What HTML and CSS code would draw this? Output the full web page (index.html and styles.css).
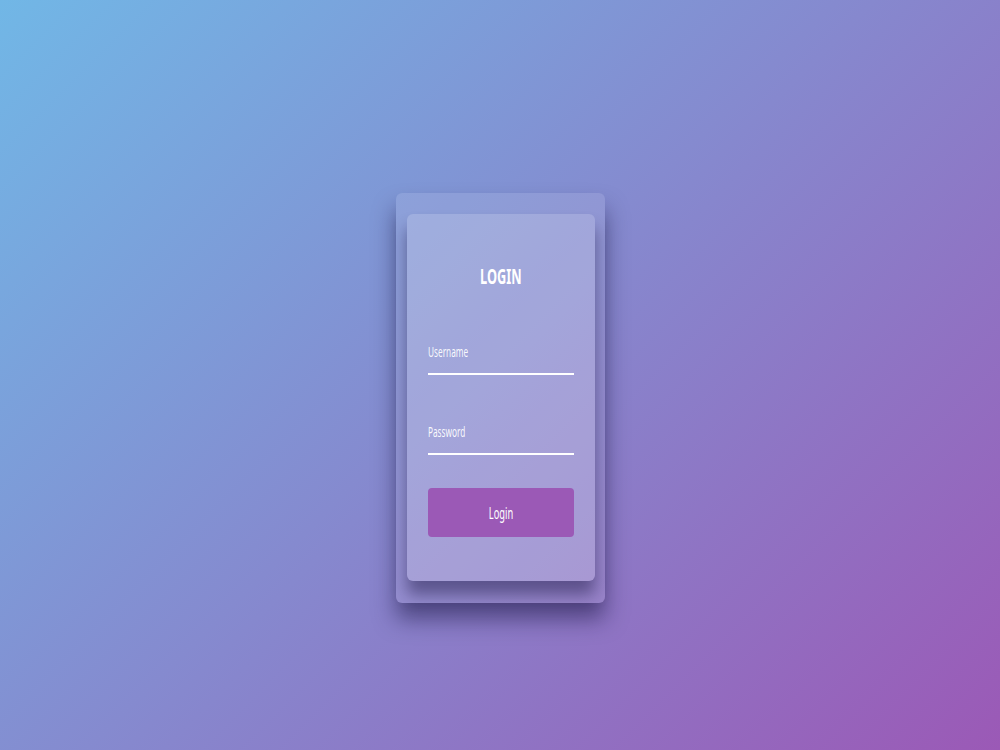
FILE: index.html
```html
<!DOCTYPE html>
<html lang="en">
<head>
<meta charset="utf-8">
<title>Login</title>
<link rel="stylesheet" href="styles.css">
</head>
<body>
<div class="stage">
  <div class="outer">
    <form class="card">
      <h1 class="title"><span class="squeeze">LOGIN</span></h1>
      <label class="field"><span class="label squeeze">Username</span></label>
      <label class="field field-gap"><span class="label squeeze">Password</span></label>
      <button type="button" class="btn"><span class="squeeze">Login</span></button>
    </form>
  </div>
</div>
</body>
</html>
```
FILE: styles.css
```css
html, body {
  margin: 0;
  padding: 0;
}
body {
  width: 1000px;
  height: 750px;
  overflow: hidden;
  background: linear-gradient(135deg, #71b7e6, #9b59b6);
  font-family: "Noto Sans", "Open Sans", sans-serif;
  color: #fff;
}
.stage {
  display: flex;
  justify-content: center;
  padding-top: 193px;
  padding-left: 1px;
}
.outer {
  width: 209px;
  box-sizing: border-box;
  padding: 21px 10px 22px 11px;
  border-radius: 6px;
  background: rgba(255, 255, 255, 0.1);
  box-shadow: 0 16px 22px rgba(20, 15, 60, 0.5);
}
.card {
  width: 188px;
  height: 367px;
  box-sizing: border-box;
  padding: 48px 21px 0;
  border-radius: 6px;
  background: rgba(255, 255, 255, 0.16);
  box-shadow: 0 14px 16px rgba(20, 15, 60, 0.45);
  display: flex;
  flex-direction: column;
  margin: 0;
}
.squeeze {
  display: inline-block;
  transform: scaleX(0.58);
}
.title {
  margin: 0;
  font-size: 22px;
  line-height: 26px;
  font-weight: 700;
  text-align: center;
}
.title .squeeze {
  transform-origin: center;
}
.field {
  display: block;
  height: 38px;
  margin-top: 47px;
  border-bottom: 2px solid #fff;
  box-sizing: content-box;
}
.field-gap {
  margin-top: 40px;
}
.label {
  display: block;
  width: 160px;
  padding-top: 6px;
  font-size: 15px;
  line-height: 20px;
  color: rgba(255, 255, 255, 0.95);
  transform: scaleX(0.55);
  transform-origin: left center;
}
.btn {
  margin-top: 33px;
  height: 49px;
  border: none;
  border-radius: 4px;
  background: #9b59b6;
  color: #fff;
  font-family: inherit;
  font-size: 16px;
  padding: 0;
}
.btn .squeeze {
  transform-origin: center;
}
```
